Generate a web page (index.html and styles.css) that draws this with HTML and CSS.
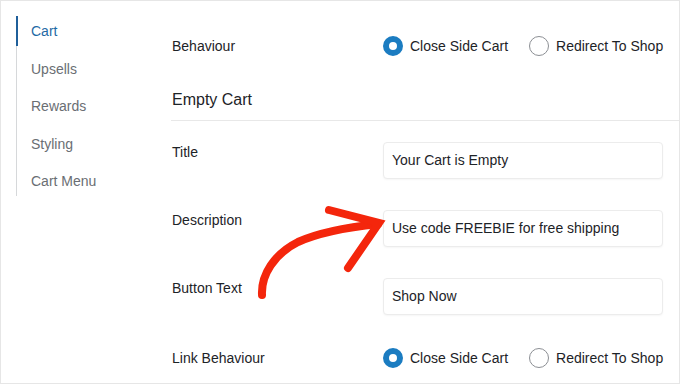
FILE: index.html
```html
<!DOCTYPE html>
<html>
<head>
<meta charset="utf-8">
<link rel="stylesheet" href="styles.css">
</head>
<body>
<div class="frame">
  <nav class="side">
    <ul class="nav">
      <li class="nav-item active">Cart</li>
      <li class="nav-item">Upsells</li>
      <li class="nav-item">Rewards</li>
      <li class="nav-item">Styling</li>
      <li class="nav-item">Cart Menu</li>
    </ul>
  </nav>
  <main class="main">
    <div class="row row-radio first">
      <div class="label">Behaviour</div>
      <div class="radios">
        <span class="radio checked"></span><span class="rlabel">Close Side Cart</span>
        <span class="radio"></span><span class="rlabel">Redirect To Shop</span>
      </div>
    </div>
    <h2 class="section">Empty Cart</h2>
    <div class="row row-field">
      <div class="label">Title</div>
      <div class="input">Your Cart is Empty</div>
    </div>
    <div class="row row-field">
      <div class="label">Description</div>
      <div class="input">Use code FREEBIE for free shipping</div>
    </div>
    <div class="row row-field">
      <div class="label">Button Text</div>
      <div class="input">Shop Now</div>
    </div>
    <div class="row row-radio last">
      <div class="label">Link Behaviour</div>
      <div class="radios">
        <span class="radio checked"></span><span class="rlabel">Close Side Cart</span>
        <span class="radio"></span><span class="rlabel">Redirect To Shop</span>
      </div>
    </div>
  </main>
  <svg class="arrow" width="140" height="110" viewBox="0 0 140 110">
    <path d="M12,100 C11,80 24,59 48,47 C70,37 100,32 128,29" fill="none" stroke="#f4260c" stroke-width="8" stroke-linecap="round"/>
    <path d="M79,15 L129,28 L98,73" fill="none" stroke="#f4260c" stroke-width="8" stroke-linecap="round" stroke-linejoin="miter"/>
  </svg>
</div>
</body>
</html>
```

FILE: styles.css
```css
* { box-sizing: border-box; }
html, body { margin: 0; padding: 0; background: #fff; }
body {
  font-family: "Liberation Sans", Arial, sans-serif;
  font-size: 14px;
  color: #1d2327;
}
.frame {
  position: relative;
  width: 680px;
  height: 384px;
  border: 1px solid #e6e6e6;
  display: flex;
  overflow: hidden;
}
.side {
  width: 170px;
  flex: none;
  padding: 15px 0 0 15px;
}
.nav {
  list-style: none;
  margin: 0;
  padding: 0;
  border-left: 1px solid #d6d8da;
  width: 140px;
}
.nav-item {
  height: 30px;
  line-height: 30px;
  padding-left: 14px;
  margin-bottom: 7.5px;
  color: #6a6e73;
  font-size: 14px;
}
.nav-item:last-child { margin-bottom: 0; }
.nav-item.active {
  color: #1f6aa5;
  margin-left: -1px;
  border-left: 2px solid #1f5f9a;
  padding-left: 13px;
}
.main {
  flex: 1;
  padding-top: 35px;
}
.row {
  display: grid;
  grid-template-columns: 211px 280px;
  padding-left: 1px;
}
.row-radio { align-items: center; height: 20px; }
.row-radio.last { margin-top: 33px; }
.row-field { margin-bottom: 31px; }
.row-field:last-of-type { margin-bottom: 0; }
.label { line-height: 20px; color: #1d2327; white-space: nowrap; }
.row-field .label { line-height: 20px; }
.radios {
  display: flex;
  align-items: center;
  height: 20px;
  white-space: nowrap;
}
.radio {
  width: 20px;
  height: 20px;
  border-radius: 50%;
  border: 1px solid #8c8f94;
  background: #fff;
  flex: none;
  margin-right: 7px;
}
.radio.checked {
  border: 6px solid #1b7cc1;
}
.rlabel { margin-right: 21px; color: #1d2327; flex: none; }
.rlabel:last-child { margin-right: 0; }
.section {
  margin: 34px 0 0 0;
  padding: 0 0 10px 1px;
  font-size: 16px;
  font-weight: normal;
  line-height: 20px;
  border-bottom: 1px solid #e8e8e8;
  margin-bottom: 21px;
  color: #1d2327;
}
.input {
  height: 37px;
  border: 1px solid #ececec;
  border-radius: 4px;
  box-shadow: 0 1px 2px rgba(0,0,0,0.04);
  padding: 0 8px;
  line-height: 35px;
  color: #1d2327;
  background: #fff;
}
.arrow {
  position: absolute;
  left: 249px;
  top: 194px;
}
```
